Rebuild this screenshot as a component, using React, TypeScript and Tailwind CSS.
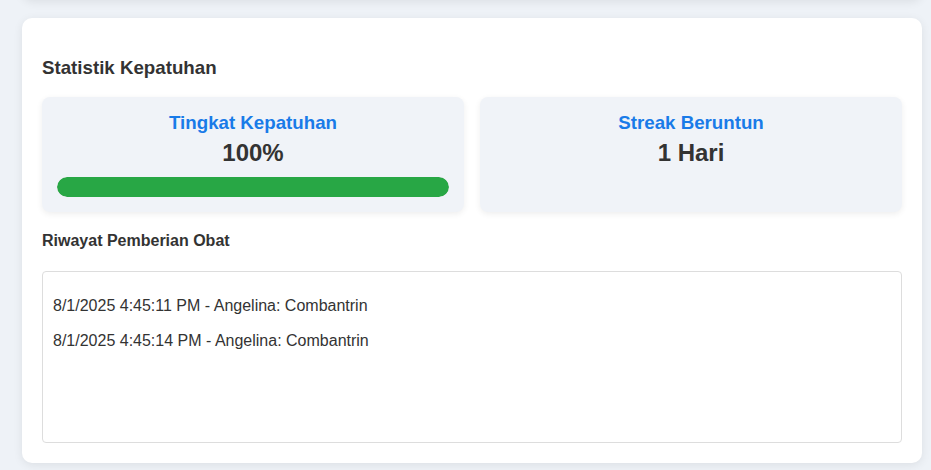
import React from "react"

const riwayat = [
  "8/1/2025 4:45:11 PM - Angelina: Combantrin",
  "8/1/2025 4:45:14 PM - Angelina: Combantrin",
]

function StatBox({ title, children }: { title: string; children: React.ReactNode }) {
  return (
    <div className="rounded-lg bg-[#f0f3f8] p-[15px] text-center shadow-[0_2px_6px_rgba(0,0,0,0.07)]">
      <h3 className="text-[18.72px] font-bold leading-[21.5px] text-[#197be8]">{title}</h3>
      {children}
    </div>
  )
}

export default function App() {
  const kepatuhan = 100

  return (
    <div
      className="flex min-h-screen flex-col bg-[#eef2f7] pl-[22px] pr-[9px] pb-6 text-[#333]"
      style={{ fontFamily: '"Liberation Sans", Arial, sans-serif' }}
    >
      {/* bagian atas yang sudah terscroll */}
      <div className="-mt-[20px] h-[20px] rounded-b-[10px] bg-white shadow-[0_2px_10px_rgba(0,0,0,0.08)]" />

      <div className="mt-[18px] rounded-[10px] bg-white p-5 shadow-[0_2px_10px_rgba(0,0,0,0.08)]">
        <h3 className="my-[18.72px] text-[18.72px] font-bold leading-[21.5px]">Statistik Kepatuhan</h3>

        <div className="grid grid-cols-2 gap-4">
          <StatBox title="Tingkat Kepatuhan">
            <div className="mt-[5.5px] text-2xl font-bold leading-[27.6px]">{kepatuhan}%</div>
            <div className="mt-[10px] h-5 w-full overflow-hidden rounded-full bg-[#e0e0e0]">
              <div className="h-full rounded-full bg-[#28a745]" style={{ width: `${kepatuhan}%` }} />
            </div>
          </StatBox>
          <StatBox title="Streak Beruntun">
            <div className="mt-[5.5px] text-2xl font-bold leading-[27.6px]">1 Hari</div>
          </StatBox>
        </div>

        <h4 className="mt-[20px] mb-[21.5px] text-base font-bold leading-[18.4px]">Riwayat Pemberian Obat</h4>

        <div className="flex h-[172px] flex-col gap-4 rounded border border-[#ddd] px-[10px] pt-[25px]">
          {riwayat.map((r) => (
            <div key={r} className="text-base leading-[18.4px]">
              {r}
            </div>
          ))}
        </div>
      </div>
    </div>
  )
}
